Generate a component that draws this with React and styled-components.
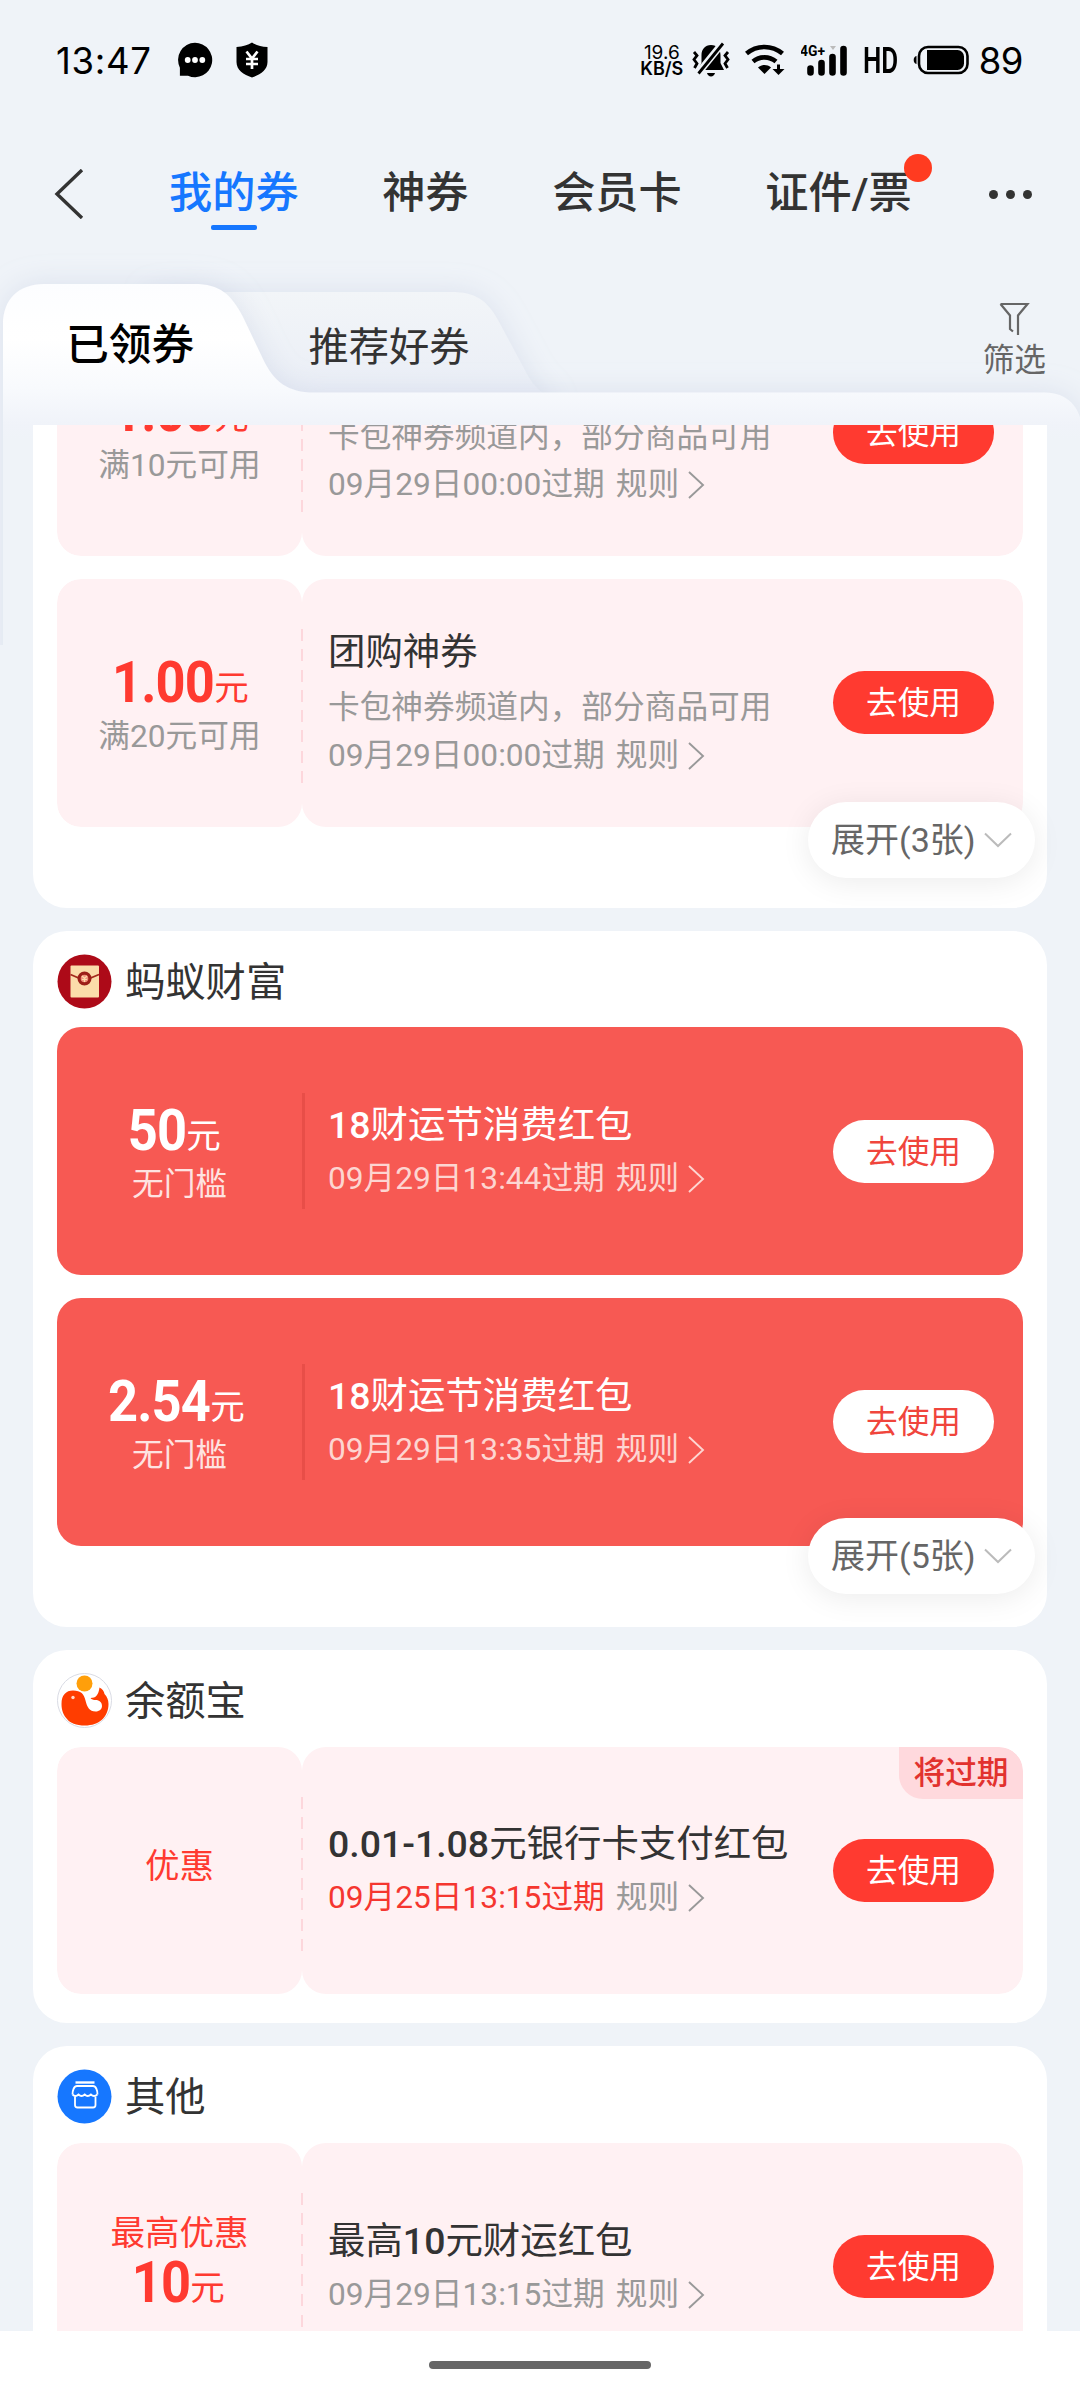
import styled, { createGlobalStyle, css } from "styled-components";

const GlobalStyle = createGlobalStyle`
  * {
    box-sizing: border-box;
  }

  body {
    margin: 0;
    background: #eff3f8;
    font-family: Roboto, "Noto Sans CJK SC", sans-serif;
    -webkit-font-smoothing: antialiased;
  }
`;

// Coupon data, grouped by the service that issued them
const groups = [
  {
    id: "shenquan",
    more: 3,
    lift: 25,
    coupons: [
      {
        price: "1.00",
        note: "满10元可用",
        title: "团购神券",
        desc: "卡包神券频道内，部分商品可用",
        date: "09月29日00:00过期",
      },
      {
        price: "1.00",
        note: "满20元可用",
        title: "团购神券",
        desc: "卡包神券频道内，部分商品可用",
        date: "09月29日00:00过期",
      },
    ],
  },
  {
    id: "fortune",
    name: "蚂蚁财富",
    more: 5,
    lift: 28,
    coupons: [
      { solid: true, price: "50", note: "无门槛", title: "18财运节消费红包", date: "09月29日13:44过期" },
      { solid: true, price: "2.54", note: "无门槛", title: "18财运节消费红包", date: "09月29日13:35过期" },
    ],
  },
  {
    id: "yuebao",
    name: "余额宝",
    coupons: [
      {
        label: "优惠",
        title: "0.01-1.08元银行卡支付红包",
        date: "09月25日13:15过期",
        urgent: true,
      },
    ],
  },
  {
    id: "other",
    name: "其他",
    coupons: [{ label: "最高优惠", price: "10", title: "最高10元财运红包", date: "09月29日13:15过期" }],
  },
];

// Status bar icons
const ChatIcon = () => (
  <svg width="36" height="36" viewBox="0 0 36 36">
    <path d="M18 .8a17.2 17.2 0 1 1-7 32.9H2.9v-8A17.2 17.2 0 0 1 18 .8z" fill="#000" />
    <circle cx="10.7" cy="18" r="2.9" fill="#fff" />
    <circle cx="18" cy="18" r="2.9" fill="#fff" />
    <circle cx="25.3" cy="18" r="2.9" fill="#fff" />
  </svg>
);

const ShieldIcon = () => (
  <svg width="32" height="36" viewBox="0 0 32 36">
    <path d="M16 .5c4 2.700 9 4 15.500 4.600V20c0 8-7 12.500-15.500 15.500C7.500 32.500.5 28 .5 20V5.100C7 4.500 12 3.200 16 .5z" fill="#000" />
    <path d="M10.500 9.500l5.500 7 5.500-7M10 17h12M10 22h12M16 16.500V27" fill="none" stroke="#fff" strokeWidth="2.700" />
  </svg>
);

const MutedBellIcon = () => (
  <svg width="38" height="36" viewBox="0 0 38 36">
    <path d="M19 3c6 0 9.500 4.500 9.500 10v8l3.500 7H6l3.500-7v-8C9.500 7.500 13 3 19 3z" fill="#000" />
    <path d="M15 31h8c-.6 2.300-2 3.500-4 3.500S15.600 33.300 15 31z" fill="#000" />
    <path d="M31 .5L5.500 32" stroke="#eff3f8" strokeWidth="7" />
    <path d="M31 1.500L6.500 31.500" stroke="#000" strokeWidth="2.800" />
    <path d="M2 10l3 3.500-3 4 3 4-2.500 4.500M36 10l-3 3.500 3 4-3 4 2.500 4.500" fill="none" stroke="#000" strokeWidth="2.800" />
  </svg>
);

const WifiIcon = () => (
  <svg width="40" height="34" viewBox="0 0 40 34">
    <path d="M1.500 10.500a28 28 0 0 1 36 0M8 18.500a18 18 0 0 1 23 0" fill="none" stroke="#000" strokeWidth="4.600" />
    <path d="M13 24.500c4-3.200 9-3.200 13 0L19.500 31z" fill="#000" />
    <path d="M33.500 21.500v6" stroke="#000" strokeWidth="3" />
    <path d="M27.500 26h12L33.500 32z" fill="#000" />
  </svg>
);

const SignalIcon = () => (
  <svg width="46" height="34" viewBox="0 0 46 34">
    <text x="-1" y="13" fontSize="15" fontWeight="700" fontFamily="Roboto" textLength="25" lengthAdjust="spacingAndGlyphs">
      4G+
    </text>
    <path d="M9.500 25.500v4M20.500 20v9.500M31.500 14v15.500M42.500 6v23.500" stroke="#000" strokeWidth="6.600" strokeLinecap="round" />
    <path d="M29 3h6l-3 4z" fill="#bbb" />
  </svg>
);

const BatteryIcon = () => (
  <svg width="57" height="30" viewBox="0 0 57 30">
    <path d="M3.500 11v8C1.500 18.500.7 17 .7 15s.8-3.500 2.800-4z" fill="#000" />
    <rect x="6" y="2" width="48.500" height="26" rx="9" fill="none" stroke="#000" strokeWidth="2.600" />
    <path d="M14 5h30.500a6.500 6.500 0 0 1 6.500 6.500v7a6.500 6.500 0 0 1-6.500 6.500H14z" fill="#000" />
  </svg>
);

const BackIcon = () => (
  <svg width="30" height="50" viewBox="0 0 30 50">
    <path d="M28 1L3 25l25 24" fill="none" stroke="#333" strokeWidth="3.400" />
  </svg>
);

const FunnelIcon = () => (
  <svg width="32" height="34" viewBox="0 0 32 34">
    <path d="M2.500 2h27L20 13.500V33M2.500 2l9.500 11.500V27l3 2.500" fill="none" stroke="#666" strokeWidth="2.200" />
  </svg>
);

const ArrowRight = () => (
  <svg width="17" height="28" viewBox="0 0 17 28">
    <path d="M1 1l14 13L1 27" fill="none" stroke="currentColor" strokeWidth="1.900" />
  </svg>
);

const ArrowDown = () => (
  <svg width="28" height="16" viewBox="0 0 28 16">
    <path d="M1 1.500l13 12.500L27 1.500" fill="none" stroke="#bbb" strokeWidth="2" />
  </svg>
);

// Service logos
const FortuneLogo = () => (
  <svg width="55" height="55" viewBox="0 0 55 55">
    <circle cx="27.500" cy="27.500" r="27" fill="#ad0a18" />
    <rect x="13.500" y="11.500" width="28.500" height="32" rx="1" fill="#fbdcaa" />
    <path d="M13.500 20.500l14 6 14.500-6" fill="none" stroke="#a32a1c" strokeWidth="1.800" />
    <circle cx="27.500" cy="24.500" r="5.400" fill="#f0907c" stroke="#9c1f18" strokeWidth="3.200" />
    <path d="M25 22l2.500 2.500L30 22M27.500 24.500V28M25 25.500h5" stroke="#fbdcaa" strokeWidth="1.200" fill="none" />
  </svg>
);

const YuebaoLogo = () => (
  <svg width="55" height="55" viewBox="0 0 55 55">
    <circle cx="27.500" cy="27.500" r="27" fill="#fff" stroke="#d9dbe4" />
    <circle cx="27.500" cy="10.500" r="8" fill="#ff9f0a" />
    <path
      d="M4.500 31C4.500 22 9 17.500 16 17.500c8 0 11 3.500 12.500 10C30 34 32.500 38.500 38.500 38.500c4 0 6.500-2.500 6.500-5.500 0-3.500-2.500-6-6.500-6-2 0-4-.5-5-2 5.500 0 8-3 9-10.500 3 1.500 4.500 3.500 5 6.500C50 23.500 51.500 27 51.500 31 51.500 44 42 52.500 28 52.500c-9 0-15-2.500-18-6.500-3.500-3.500-5.500-9-5.500-15z"
      fill="#ff3d00"
    />
    <circle cx="16" cy="24.500" r="1.700" fill="#ffd9c8" />
  </svg>
);

const ShopLogo = () => (
  <svg width="55" height="55" viewBox="0 0 55 55">
    <circle cx="27.500" cy="27.500" r="27" fill="#1677ff" />
    <g fill="none" stroke="#fff" strokeWidth="1.800">
      <path d="M18.500 13.500h19" strokeWidth="2.400" />
      <path d="M15.500 25.500c0-4 1.500-8.500 4.500-8.500h16c3 0 4.500 4.500 4.500 8.500" />
      <path d="M15.500 25.500q3 3 6 0 3 3 6.200 0 3 3 6.200 0 3 3 6.500 0" />
      <path d="M18 27.500V36c0 1.500.8 2.500 2.500 2.500H36c1.500 0 2.500-1 2.500-2.500v-8.500" />
    </g>
  </svg>
);

const logos = {
  fortune: FortuneLogo,
  yuebao: YuebaoLogo,
  other: ShopLogo,
};

// Folder-shaped backdrop behind the two sub tabs
const FolderShape = () => (
  <Folder width="1080" height="425" viewBox="0 220 1080 425">
    <defs>
      <linearGradient id="front" gradientUnits="userSpaceOnUse" x1="0" y1="284" x2="0" y2="440">
        <stop offset="0" stopColor="#fcfdff" />
        <stop offset="0.35" stopColor="#fff" />
        <stop offset="0.66" stopColor="#f8fafd" />
        <stop offset="0.9" stopColor="#f0f3f9" />
        <stop offset="1" stopColor="#eff3f8" />
      </linearGradient>
      <linearGradient id="back" gradientUnits="userSpaceOnUse" x1="0" y1="292" x2="0" y2="392">
        <stop offset="0" stopColor="#f2f5f8" />
        <stop offset="1" stopColor="#eaeef6" />
      </linearGradient>
      <filter id="soft" filterUnits="userSpaceOnUse" x="-60" y="200" width="1200" height="640">
        <feDropShadow dx="0" dy="0" stdDeviation="14" floodColor="#b4bfd8" floodOpacity="0.34" />
      </filter>
    </defs>
    <path d="M150 292H451C475 292 487 300 498 320L528 376Q536 390 552 400V410H150z" fill="url(#back)" filter="url(#soft)" />
    <path
      d="M3 324C3 300 18 284 44 284H194C220 284 231 294 243 317L263 359C274 382 288 392.500 314 392.500H1045C1066 392.500 1082 406 1082 432V760H3z"
      fill="url(#front)"
      filter="url(#soft)"
    />
  </Folder>
);

const Coupon = ({ coupon }) => {
  const { solid, price, label, note, title, desc, date, urgent } = coupon;
  return (
    <Ticket $solid={solid}>
      <Stub $solid={solid} $labelled={Boolean(label)}>
        {label && <StubLabel>{label}</StubLabel>}
        {price && (
          <Price $solid={solid}>
            <Amount>{price}</Amount>
            <Unit>元</Unit>
          </Price>
        )}
        {note && <Note $solid={solid}>{note}</Note>}
      </Stub>
      <Details $solid={solid}>
        <Perforation $solid={solid} />
        {urgent && <ExpiryTag>将过期</ExpiryTag>}
        <Info>
          <CouponTitle>
            {title.split(/([\d.-]+)/).map((part, i) => (i % 2 ? <b key={i}>{part}</b> : part))}
          </CouponTitle>
          {desc && <Desc>{desc}</Desc>}
          <DateLine $solid={solid}>
            <Expiry $urgent={urgent}>{date}</Expiry>
            <Rules>
              规则
              <ArrowRight />
            </Rules>
          </DateLine>
        </Info>
        <UseButton $solid={solid}>去使用</UseButton>
      </Details>
    </Ticket>
  );
};

const App = () => {
  return (
    <Screen>
      <GlobalStyle />
      <StatusBar>
        <Clock>13:47</Clock>
        <ChatIcon />
        <ShieldIcon />
        <StatusRight>
          <Speed>
            <span>19.6</span>
            <strong>KB/S</strong>
          </Speed>
          <MutedBellIcon />
          <WifiIcon />
          <SignalIcon />
          <Hd>HD</Hd>
          <BatteryIcon />
          <Level>89</Level>
        </StatusRight>
      </StatusBar>

      <NavBar>
        <BackIcon />
        <NavTabs>
          <NavTab $active>我的券</NavTab>
          <NavTab>神券</NavTab>
          <NavTab>会员卡</NavTab>
          <NavTab $dot>证件/票</NavTab>
        </NavTabs>
        <MoreDots>
          <i />
          <i />
          <i />
        </MoreDots>
      </NavBar>

      <SubBar>
        <FolderShape />
        <SubTab $active>已领券</SubTab>
        <SubTab>推荐好券</SubTab>
        <Filter>
          <FunnelIcon />
          筛选
        </Filter>
      </SubBar>

      <Scroller>
        <List>
          {groups.map((group) => {
            const Logo = logos[group.id];
            return (
              <Card key={group.id}>
                {group.name && (
                  <CardHeader>
                    <Logo />
                    <CardName>{group.name}</CardName>
                  </CardHeader>
                )}
                <Coupons>
                  {group.coupons.map((coupon, i) => (
                    <Coupon key={i} coupon={coupon} />
                  ))}
                </Coupons>
                {group.more && (
                  <CardFooter>
                    <Expand $lift={group.lift}>
                      展开({group.more}张)
                      <ArrowDown />
                    </Expand>
                  </CardFooter>
                )}
              </Card>
            );
          })}
        </List>
      </Scroller>

      <HomeBar>
        <HomeHandle />
      </HomeBar>
    </Screen>
  );
};

const Screen = styled.div`
  display: flex;
  flex-direction: column;
  width: 1080px;
  height: 2400px;
  overflow: hidden;
  background: #eff3f8;
  color: #333;
`;

const StatusBar = styled.header`
  display: flex;
  align-items: center;
  height: 120px;
  padding: 0 57px 0 56px;
  color: #000;

  svg {
    flex-shrink: 0;
  }
`;

const Clock = styled.div`
  width: 121px;
  padding-top: 2px;
  font-family: Inter, sans-serif;
  font-size: 36.5px;
  letter-spacing: 0.7px;

  & + svg {
    margin-right: 23px;
  }
`;

const StatusRight = styled.div`
  display: flex;
  align-items: center;
  margin-left: auto;
`;

const Speed = styled.div`
  display: flex;
  flex-direction: column;
  align-items: center;
  width: 44px;
  padding-top: 2px;
  margin-right: 8px;
  font-family: Inter, sans-serif;
  font-size: 19px;
  line-height: 16px;

  strong {
    font-size: 18px;
    font-weight: 600;
  }

  & + svg {
    margin-right: 15px;
  }

  & + svg + svg {
    margin-right: 16px;
  }
`;

const Hd = styled.div`
  width: 36px;
  margin: 0 14px 0 16px;
  font-size: 37px;
  font-weight: 600;
  transform: scaleX(0.7);
  transform-origin: left;
`;

const Level = styled.div`
  margin-left: 9px;
  padding-top: 1px;
  font-family: Inter, sans-serif;
  font-size: 36.5px;
  letter-spacing: -0.5px;
`;

const NavBar = styled.nav`
  display: flex;
  align-items: center;
  height: 148px;
  padding: 0 48px 0 54px;
`;

const NavTabs = styled.div`
  display: flex;
  gap: 83.6px;
  margin-left: 85px;
`;

const NavTab = styled.div`
  position: relative;
  font-size: 43.2px;
  font-weight: 500;
  line-height: 60px;
  color: ${({ $active }) => ($active ? "#1677ff" : "#333")};

  ${({ $active }) =>
    $active &&
    css`
      &::after {
        content: "";
        position: absolute;
        left: 42px;
        bottom: -6px;
        width: 46px;
        height: 5px;
        border-radius: 2px;
        background: #1677ff;
      }
    `}

  ${({ $dot }) =>
    $dot &&
    css`
      &::after {
        content: "";
        position: absolute;
        right: -20px;
        top: -10px;
        width: 28px;
        height: 28px;
        border-radius: 50%;
        background: #ff3b20;
      }
    `}
`;

const MoreDots = styled.div`
  display: flex;
  gap: 8px;
  margin-left: auto;

  i {
    width: 9px;
    height: 9px;
    border-radius: 50%;
    background: #333;
  }
`;

const SubBar = styled.div`
  position: relative;
  z-index: 0;
  display: flex;
  align-items: flex-start;
  height: 156.5px;
  padding: 0 34px 0 66px;
`;

const Folder = styled.svg`
  position: absolute;
  left: 0;
  top: -48px;
  z-index: -1;
`;

const SubTab = styled.div`
  margin: ${({ $active }) => ($active ? "47px 114px 0 0" : "50px 0 0")};
  font-size: ${({ $active }) => ($active ? "42.8px" : "40.3px")};
  font-weight: ${({ $active }) => ($active ? 500 : 400)};
  line-height: 60px;
  color: ${({ $active }) => ($active ? "#000" : "#333")};
`;

const Filter = styled.div`
  display: flex;
  flex-direction: column;
  align-items: center;
  gap: 5px;
  margin: 34px 0 0 auto;
  font-size: 31.68px;
  line-height: 40px;
  color: #666;
`;

const Scroller = styled.main`
  position: relative;
  flex: 1;
  min-height: 0;
  overflow: hidden;
`;

// The list is scrolled, so its first coupon starts above the fold
const List = styled.div`
  display: flex;
  flex-direction: column;
  gap: 23px;
  margin: -116.3px 33px 0;
`;

const Card = styled.section`
  padding: 0 24px 29px;
  border-radius: 34px;
  background: #fff;
`;

const CardHeader = styled.div`
  display: flex;
  align-items: center;
  gap: 13px;
  height: 96.5px;
  padding-top: 5px;
`;

const CardName = styled.h2`
  margin: 0;
  padding-top: 2px;
  font-size: 40.3px;
  font-weight: 400;
  line-height: 50px;
`;

const Coupons = styled.div`
  display: flex;
  flex-direction: column;
  gap: 23px;
`;

const CardFooter = styled.div`
  display: flex;
  justify-content: flex-end;
  height: 52.3px;
  margin-right: -12px;
`;

const Expand = styled.button`
  position: relative;
  top: ${({ $lift }) => -$lift}px;
  display: flex;
  flex-shrink: 0;
  align-items: center;
  gap: 8px;
  width: 227px;
  height: 76px;
  padding: 0 0 4px 23px;
  border: none;
  border-radius: 38px;
  background: #fff;
  box-shadow: 0 4px 30px rgba(0, 0, 0, 0.08);
  font-family: inherit;
  font-size: 34px;
  white-space: nowrap;
  color: #666;

  svg {
    margin-top: 5px;
  }
`;

const Ticket = styled.article`
  display: flex;
  height: 247.7px;
  border-radius: 24px;
  overflow: hidden;
  background: ${({ $solid }) => ($solid ? "#f75953" : "transparent")};
  color: ${({ $solid }) => ($solid ? "#fff" : "#333")};
`;

const Stub = styled.div`
  display: flex;
  flex-direction: column;
  align-items: center;
  justify-content: center;
  width: 245px;
  padding: ${({ $labelled }) => ($labelled ? "0 0 9px" : "9px 0 0")};
  border-radius: 24px;
  background: ${({ $solid }) => ($solid ? "transparent" : "#fff1f3")};
  color: ${({ $solid }) => ($solid ? "#fff" : "#ff3a30")};
`;

const StubLabel = styled.div`
  font-size: 34.56px;
  line-height: 42px;
`;

const Price = styled.div`
  display: flex;
  align-items: baseline;
  height: 58px;
  margin-right: ${({ $solid }) => ($solid ? "8px" : "0")};
  line-height: 58px;
`;

// Squeezed a little to get the narrow figures used for money
const Amount = styled.span`
  margin-left: -8px;
  font-size: 57.6px;
  font-weight: 700;
  letter-spacing: -1px;
  transform: scaleX(0.91);
  transform-origin: right;
`;

const Unit = styled.span`
  margin: 0 0 3px;
  font-size: 34.56px;
  line-height: 34px;
  transform: translateY(-2px);
`;

const Note = styled.div`
  font-size: 31.68px;
  line-height: 49px;
  color: ${({ $solid }) => ($solid ? "#fee3e1" : "#999")};
`;

const Details = styled.div`
  position: relative;
  display: flex;
  flex: 1;
  align-items: center;
  justify-content: space-between;
  padding: 0 29px 0 26px;
  border-radius: 24px;
  background: ${({ $solid }) => ($solid ? "transparent" : "#fff1f3")};
`;

const Perforation = styled.div`
  position: absolute;
  left: ${({ $solid }) => ($solid ? "0" : "-1px")};
  top: ${({ $solid }) => ($solid ? "66px" : "50px")};
  width: ${({ $solid }) => ($solid ? "3px" : "2px")};
  height: ${({ $solid }) => ($solid ? "116px" : "155px")};
  background: ${({ $solid }) =>
    $solid ? "#e84e48" : "repeating-linear-gradient(#fdd7dc 0 12px, transparent 12px 20.3px)"};
`;

const Info = styled.div`
  display: flex;
  flex-direction: column;
  padding-bottom: 2px;
`;

const CouponTitle = styled.h3`
  margin: 0;
  font-size: 37.44px;
  font-weight: 400;
  line-height: 58px;
  white-space: nowrap;

  b {
    font-weight: 500;
  }
`;

const Desc = styled.div`
  padding-top: 2px;
  margin-bottom: -2px;
  font-size: 31.68px;
  line-height: 50px;
  color: #999;
`;

const DateLine = styled.div`
  display: flex;
  align-items: center;
  gap: 11px;
  font-size: 31.68px;
  line-height: 50px;
  color: ${({ $solid }) => ($solid ? "#fdd5d1" : "#999")};
`;

const Expiry = styled.span`
  color: ${({ $urgent }) => ($urgent ? "#f5362f" : "inherit")};
`;

const Rules = styled.span`
  display: flex;
  align-items: center;
  gap: 9px;
`;

const UseButton = styled.button`
  width: 161px;
  height: 63px;
  padding: 0 0 5px;
  border: none;
  border-radius: 32px;
  background: ${({ $solid }) => ($solid ? "#fff" : "#ff3a30")};
  font-family: inherit;
  font-size: 31.68px;
  color: ${({ $solid }) => ($solid ? "#f0453c" : "#fff")};
`;

const ExpiryTag = styled.span`
  position: absolute;
  top: 0;
  right: 0;
  width: 124px;
  height: 52px;
  border-radius: 0 24px 0 24px;
  background: #ffd9dd;
  font-size: 31.68px;
  font-weight: 500;
  line-height: 54px;
  text-align: center;
  color: #e2322e;
`;

const HomeBar = styled.footer`
  display: flex;
  justify-content: center;
  height: 69px;
  padding-top: 30px;
  background: #fff;
`;

const HomeHandle = styled.div`
  width: 222px;
  height: 8px;
  border-radius: 4px;
  background: #676767;
`;

export default App;
